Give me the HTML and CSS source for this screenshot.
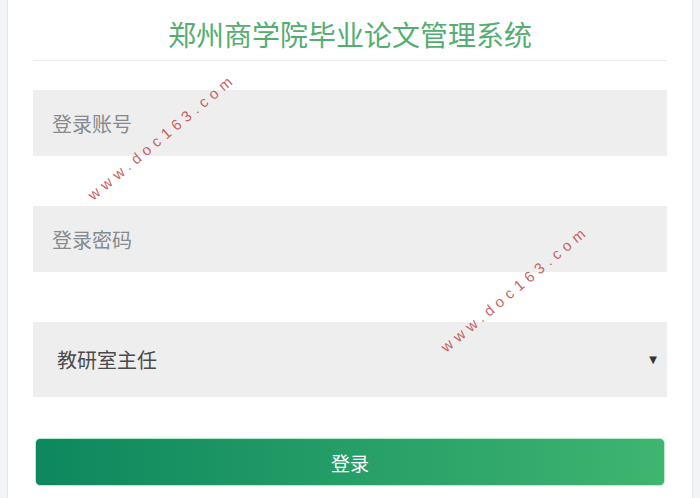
FILE: index.html
```html
<!DOCTYPE html>
<html lang="zh">
<head>
<meta charset="utf-8">
<title>郑州商学院毕业论文管理系统</title>
<link rel="stylesheet" href="styles.css">
</head>
<body>
<div class="page">
  <div class="panel">
    <h1 class="title">郑州商学院毕业论文管理系统</h1>
    <div class="rule"></div>
    <form class="form">
      <input class="field" type="text" placeholder="登录账号">
      <input class="field" type="password" placeholder="登录密码">
      <div class="select">
        <span class="select-text">教研室主任</span>
        <span class="select-arrow">▼</span>
      </div>
      <button class="btn" type="button">登录</button>
    </form>
  </div>
  <div class="wm wm1">www.doc163.com</div>
  <div class="wm wm2">www.doc163.com</div>
</div>
</body>
</html>
```
FILE: styles.css
```css
html, body {
  margin: 0;
  padding: 0;
  background: #f3f4f8;
  font-family: "Noto Sans CJK SC", "Noto Sans", sans-serif;
}
.page {
  position: relative;
  width: 700px;
  height: 498px;
  overflow: hidden;
}
.panel {
  margin: 0 7px;
  height: 498px;
  background: #fff;
  border-left: 1px solid #e3e5ec;
  border-right: 1px solid #e3e5ec;
  padding: 0 25px;
  box-sizing: border-box;
  display: flex;
  flex-direction: column;
}
.title {
  margin: 0;
  flex: none;
  height: 60px;
  line-height: 68px;
  font-size: 28px;
  font-weight: normal;
  color: #55ad70;
  text-align: center;
}
.rule {
  flex: none;
  height: 1px;
  background: #eaeaea;
}
.form {
  display: flex;
  flex-direction: column;
  padding-top: 29px;
}
.field {
  flex: none;
  height: 66px;
  border: none;
  outline: none;
  background: #eeeeee;
  padding: 0 19px;
  font-family: inherit;
  font-size: 20px;
  color: #555;
  margin: 0 0 50px;
  box-sizing: border-box;
}
.field::placeholder {
  color: #878a8e;
}
.select {
  flex: none;
  height: 75px;
  background: #eeeeee;
  display: flex;
  align-items: center;
  justify-content: space-between;
  padding: 0 10px 0 24px;
  margin-bottom: 41px;
}
.select-text {
  font-size: 20px;
  color: #4a4a4a;
}
.select-arrow {
  font-size: 10px;
  color: #333;
  font-family: "DejaVu Sans", sans-serif;
}
.btn {
  flex: none;
  margin: 0 2px;
  height: 48px;
  border: 1px solid #b8ecd0;
  border-radius: 5px;
  background: linear-gradient(to right, #0d875e, #3fb570);
  color: #fff;
  font-family: inherit;
  font-size: 19px;
  cursor: pointer;
}
.wm {
  position: absolute;
  width: 200px;
  text-align: center;
  font-family: "Liberation Sans", Arial, sans-serif;
  font-size: 15px;
  letter-spacing: 5px;
  color: rgba(190, 70, 70, 0.85);
  transform: rotate(-40deg);
  white-space: nowrap;
  line-height: 16px;
}
.wm1 {
  left: 62px;
  top: 129px;
}
.wm2 {
  left: 415px;
  top: 281px;
}
```
